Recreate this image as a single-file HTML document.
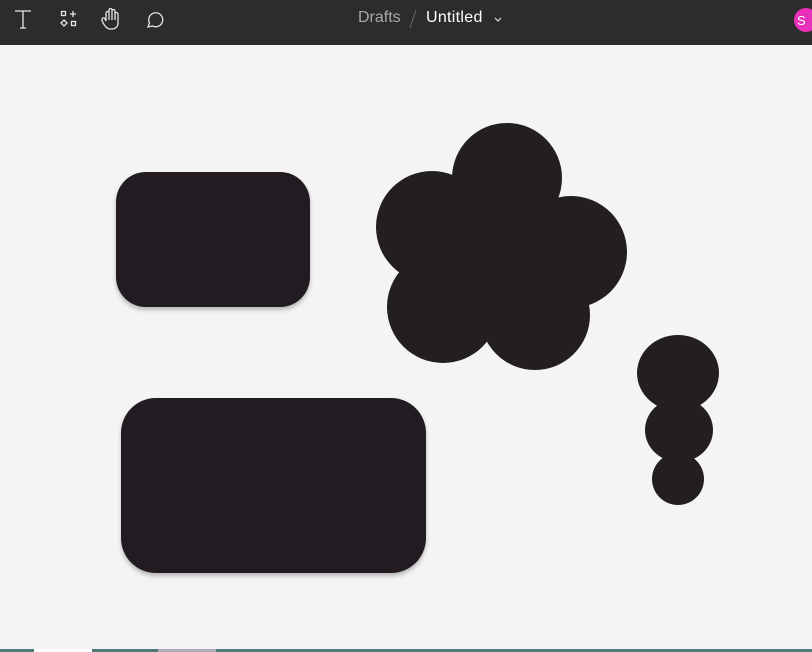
<!DOCTYPE html>
<html><head><style>
html,body{margin:0;padding:0;width:812px;height:652px;overflow:hidden;background:#f4f4f4;font-family:"Liberation Sans",sans-serif}
.top{position:absolute;left:0;top:0;width:812px;height:45px;background:#2c2c2c}
.t{position:absolute;top:9px;font-size:16px}
</style></head><body>
<div class="top">
<svg width="812" height="45" style="position:absolute;left:0;top:0">
<g fill="none" stroke="#e6e6e6" stroke-width="1.3">
<path d="M15 11H31M23 11V28M20 28H26"/>
<rect x="61.5" y="11.5" width="4" height="4"/><path d="M73 11V17M70 14H76"/>
<path d="M64 20L67 23L64 26L61 23Z"/><rect x="71.5" y="21.5" width="4" height="4"/>
<path d="M106 21V13a1.5 1.5 0 0 1 3 0V20V10a1.5 1.5 0 0 1 3 0V20V11a1.5 1.5 0 0 1 3 0V20V14a1.5 1.5 0 0 1 3 0V23c0 4-3 6-6 6h-2c-3 0-5-3-7-6l-1-3a1.5 1.5 0 0 1 3-1z"/>
<path d="M148 27l1.5-4a7 7 0 1 1 3 3z"/>
</g>
<circle cx="806" cy="20" r="12" fill="#e930b8"/>
<text x="797" y="25" fill="#fff" font-size="13" font-family="Liberation Sans">S</text>
<path d="M495 18l3 3 3-3" stroke="#ddd" fill="none" stroke-width="1.2"/>
<path d="M410 28L416 10" stroke="#666" stroke-width="1"/>
</svg>
<span class="t" style="left:358px;color:#aaa">Drafts</span>
<span class="t" style="left:426px;color:#fff;letter-spacing:0.3px">Untitled</span>
</div>
<svg width="812" height="607" style="position:absolute;left:0;top:45px" viewBox="0 45 812 607">
<defs><filter id="s" x="-10%" y="-10%" width="120%" height="130%"><feDropShadow dx="0" dy="3" stdDeviation="2" flood-color="#000" flood-opacity="0.25"/></filter></defs>
<g fill="#231f20">
<rect x="116" y="172" width="194" height="135" rx="30" filter="url(#s)"/>
<rect x="121" y="398" width="305" height="175" rx="35" filter="url(#s)"/>
<circle cx="507" cy="178" r="55"/>
<circle cx="432" cy="227" r="56"/>
<circle cx="571" cy="252" r="56"/>
<circle cx="443" cy="307" r="56"/>
<circle cx="535" cy="315" r="55"/>
<circle cx="500" cy="250" r="60"/>
<ellipse cx="678" cy="373" rx="41" ry="38"/>
<ellipse cx="679" cy="430" rx="34" ry="32"/>
<circle cx="678" cy="479" r="26"/>
</g>
<rect x="0" y="649" width="812" height="3" fill="#4d7a78"/>
<rect x="34" y="649" width="58" height="3" fill="#fff"/>
<rect x="158" y="649" width="58" height="3" fill="#aab"/>
</svg>
</body></html>
